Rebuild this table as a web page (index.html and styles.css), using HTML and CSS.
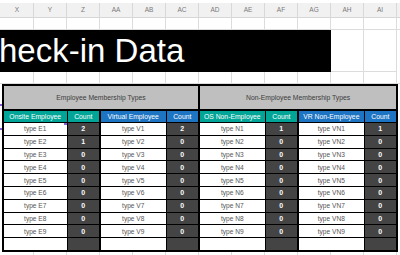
FILE: index.html
```html
<!DOCTYPE html>
<html>
<head>
<meta charset="utf-8">
<link rel="stylesheet" href="styles.css">
</head>
<body>
<div class="sheet">
  <div class="colhdr">
    <div class="lead"></div>
    <div class="ch">X</div><div class="ch">Y</div><div class="ch">Z</div><div class="ch">AA</div><div class="ch">AB</div><div class="ch">AC</div><div class="ch">AD</div><div class="ch">AE</div><div class="ch">AF</div><div class="ch">AG</div><div class="ch">AH</div><div class="ch">AI</div>
  </div>
  <div class="gridrow r1">
    <div class="lead"></div>
    <div class="gc"></div><div class="gc"></div><div class="gc"></div><div class="gc"></div><div class="gc"></div><div class="gc"></div><div class="gc"></div><div class="gc"></div><div class="gc"></div><div class="gc"></div><div class="gc"></div><div class="gc"></div>
  </div>
  <div class="titlerow">
    <div class="title">heck-in Data</div>
    <div class="gc"></div><div class="gc"></div>
  </div>
  <div class="gridrow r3">
    <div class="lead"></div>
    <div class="gc"></div><div class="gc"></div><div class="gc"></div><div class="gc"></div><div class="gc"></div><div class="gc"></div><div class="gc"></div><div class="gc"></div><div class="gc"></div><div class="gc"></div><div class="gc"></div><div class="gc"></div>
  </div>
  <div class="tablewrap">
    <span class="mark m1"></span><span class="mark m2"></span>
    <table class="data">
      <colgroup>
        <col class="wn1"><col class="wc"><col class="wn"><col class="wc"><col class="wn"><col class="wc"><col class="wn"><col class="wc">
      </colgroup>
      <tr class="group">
        <th colspan="4" class="grp">Employee Membership Types</th>
        <th colspan="4" class="grp">Non-Employee Membership Types</th>
      </tr>
      <tr class="heads">
        <th class="teal">Onsite Employee</th><th class="teal sep">Count</th>
        <th class="blue">Virtual Employee</th><th class="blue sep">Count</th>
        <th class="teal">OS Non-Employee</th><th class="teal sep">Count</th>
        <th class="blue">VR Non-Employee</th><th class="blue">Count</th>
      </tr>
      <tr><td class="nm">type E1<span class="cm"></span></td><td class="ct sep">2</td><td class="nm">type V1</td><td class="ct sep">2</td><td class="nm">type N1</td><td class="ct sep">1</td><td class="nm">type VN1</td><td class="ct">1</td></tr>
      <tr><td class="nm">type E2</td><td class="ct sep">1</td><td class="nm">type V2</td><td class="ct sep">0</td><td class="nm">type N2</td><td class="ct sep">0</td><td class="nm">type VN2</td><td class="ct">0</td></tr>
      <tr><td class="nm">type E3</td><td class="ct sep">0</td><td class="nm">type V3</td><td class="ct sep">0</td><td class="nm">type N3</td><td class="ct sep">0</td><td class="nm">type VN3</td><td class="ct">0</td></tr>
      <tr><td class="nm">type E4</td><td class="ct sep">0</td><td class="nm">type V4</td><td class="ct sep">0</td><td class="nm">type N4</td><td class="ct sep">0</td><td class="nm">type VN4</td><td class="ct">0</td></tr>
      <tr><td class="nm">type E5</td><td class="ct sep">0</td><td class="nm">type V5</td><td class="ct sep">0</td><td class="nm">type N5</td><td class="ct sep">0</td><td class="nm">type VN5</td><td class="ct">0</td></tr>
      <tr><td class="nm">type E6</td><td class="ct sep">0</td><td class="nm">type V6</td><td class="ct sep">0</td><td class="nm">type N6</td><td class="ct sep">0</td><td class="nm">type VN6</td><td class="ct">0</td></tr>
      <tr><td class="nm">type E7</td><td class="ct sep">0</td><td class="nm">type V7</td><td class="ct sep">0</td><td class="nm">type N7</td><td class="ct sep">0</td><td class="nm">type VN7</td><td class="ct">0</td></tr>
      <tr><td class="nm">type E8</td><td class="ct sep">0</td><td class="nm">type V8</td><td class="ct sep">0</td><td class="nm">type N8</td><td class="ct sep">0</td><td class="nm">type VN8</td><td class="ct">0</td></tr>
      <tr><td class="nm">type E9</td><td class="ct sep">0</td><td class="nm">type V9</td><td class="ct sep">0</td><td class="nm">type N9</td><td class="ct sep">0</td><td class="nm">type VN9</td><td class="ct">0</td></tr>
      <tr><td class="nm"></td><td class="ct sep"></td><td class="nm"></td><td class="ct sep"></td><td class="nm"></td><td class="ct sep"></td><td class="nm"></td><td class="ct"></td></tr>
    </table>
  </div>
  <div class="gridrow r4">
    <div class="lead"></div>
    <div class="gc"></div><div class="gc"></div><div class="gc"></div><div class="gc"></div><div class="gc"></div><div class="gc"></div><div class="gc"></div><div class="gc"></div><div class="gc"></div><div class="gc"></div><div class="gc"></div><div class="gc"></div>
  </div>
</div>
</body>
</html>
```
FILE: styles.css
```css
html, body {
  margin: 0;
  padding: 0;
  background: #ffffff;
}
body {
  width: 400px;
  height: 255px;
  overflow: hidden;
  font-family: "Liberation Sans", Arial, sans-serif;
}
.sheet {
  width: 400px;
}
.colhdr {
  display: flex;
  margin-top: 3px;
  height: 14px;
  background: #f1f1f1;
  border-bottom: 1px solid #d6d6d6;
}
.lead {
  width: 1px;
  flex: none;
}
.ch {
  flex: none;
  width: 32px;
  border-right: 1px solid #d8d8d8;
  font-size: 6.5px;
  color: #7a7a7a;
  text-align: center;
  line-height: 14px;
}
.gridrow {
  display: flex;
  border-bottom: 1px solid #dcdcdc;
}
.r1 { height: 11px; }
.r3 { height: 11px; }
.r4 { height: 6px; border-bottom: none; }
.gc {
  flex: none;
  width: 32px;
  border-right: 1px solid #dcdcdc;
}
.titlerow {
  display: flex;
  height: 42px;
}
.titlerow .gc {
  border-bottom: 1px solid #dcdcdc;
}
.title {
  flex: none;
  width: 331px;
  background: #000000;
  color: #ffffff;
  font-size: 33px;
  line-height: 42px;
  white-space: nowrap;
  overflow: hidden;
  text-indent: -1px;
}
.tablewrap {
  position: relative;
  padding-left: 2px;
}
.mark {
  position: absolute;
  left: 0;
  width: 2px;
  height: 2px;
  background: #8a5bd6;
}
.m1 { top: 20px; }
.m2 { top: 44px; }
table.data {
  border-collapse: collapse;
  table-layout: fixed;
  width: 394px;
  border: 2px solid #000;
}
.wn1 { width: 64px; }
.wn { width: 66px; }
.wc { width: 33px; }
th, td {
  padding: 0;
  border: 1px solid #000;
  text-align: center;
  white-space: nowrap;
  overflow: hidden;
}
.group th.grp {
  height: 23px;
  background: #bfbfbf;
  color: #3c3c3c;
  font-size: 6.8px;
  font-weight: normal;
  border: 2px solid #000;
}
.heads th {
  height: 11px;
  font-size: 6.8px;
  font-weight: normal;
  color: #ffffff;
  line-height: 11px;
}
.teal { background: #00a597; }
.blue { background: #1c74c2; }
tr td {
  height: 11.8px;
  font-size: 6.6px;
  line-height: 11px;
}
td.nm {
  background: #ffffff;
  color: #555555;
  position: relative;
}
td.ct {
  background: #444444;
  color: #ffffff;
  font-weight: bold;
  font-size: 7px;
}
.sep { border-right: 2px solid #000 !important; }
.cm {
  position: absolute;
  right: 0;
  top: 0;
  width: 3px;
  height: 2px;
  background: #8a5bd6;
}
```
